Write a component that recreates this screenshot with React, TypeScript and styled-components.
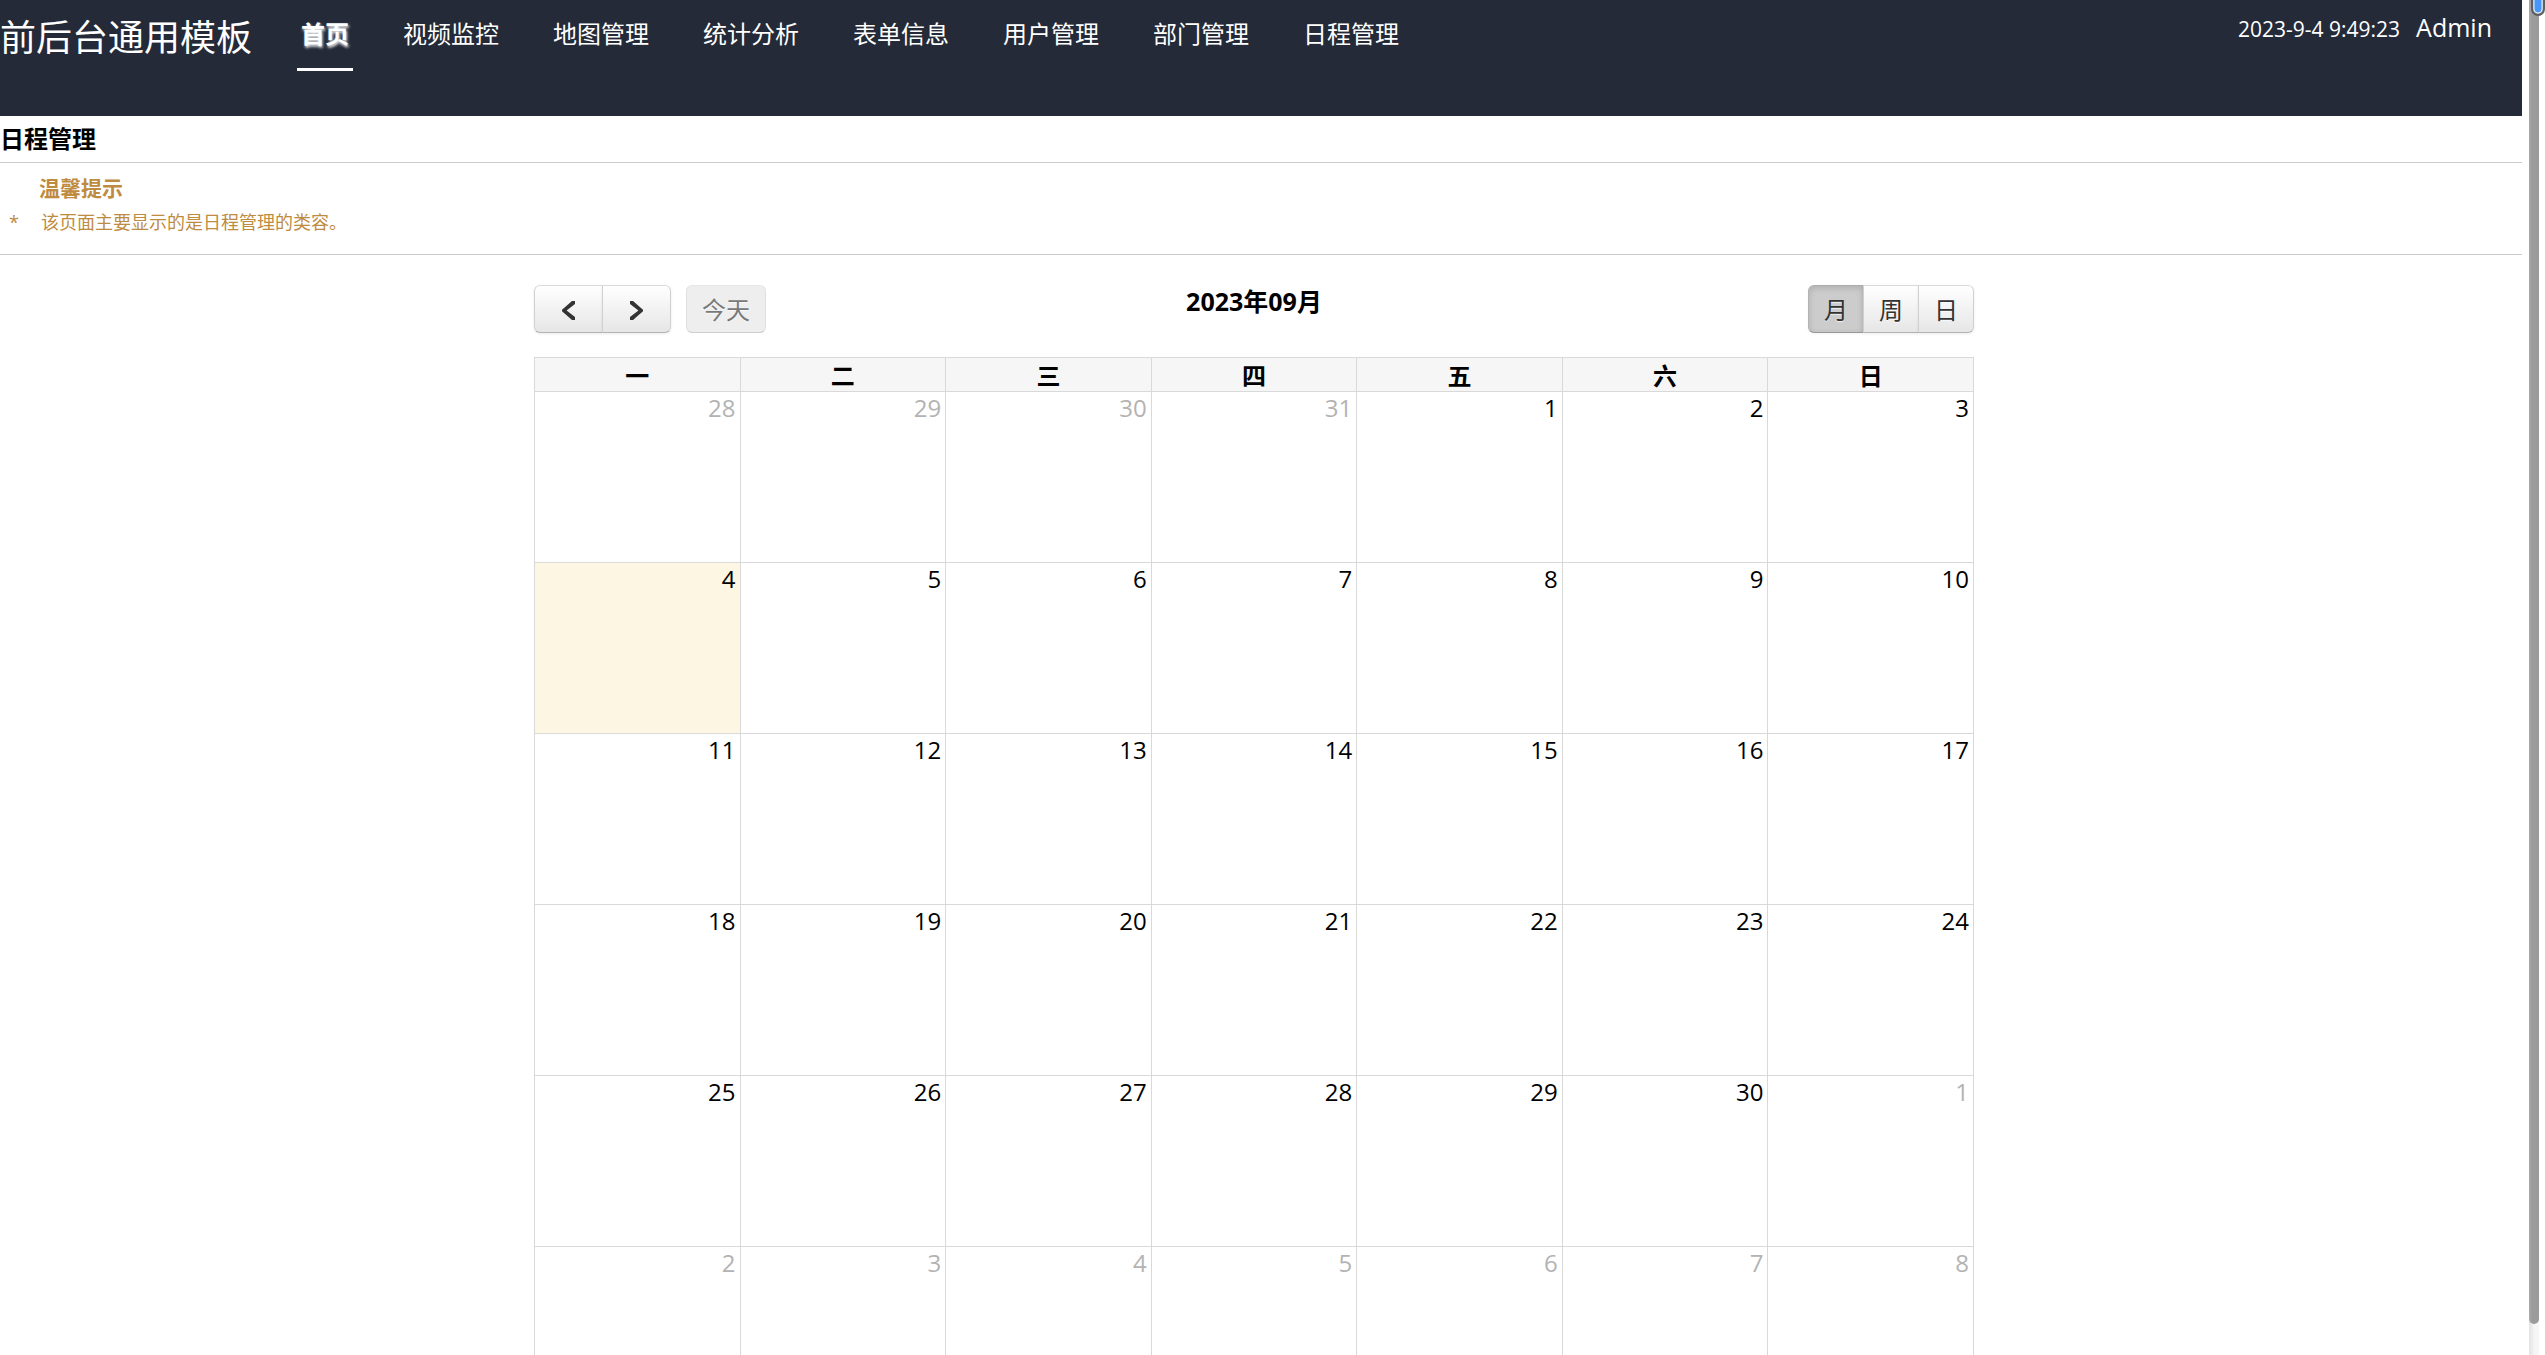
import { FC, useState } from 'react'
import styled, { createGlobalStyle, css } from 'styled-components'

type DayKind = 'current' | 'other' | 'today'

interface Day {
  date: number
  kind: DayKind
}

const navItems = [
  '首页',
  '视频监控',
  '地图管理',
  '统计分析',
  '表单信息',
  '用户管理',
  '部门管理',
  '日程管理',
]

const weekDays = ['一', '二', '三', '四', '五', '六', '日']

const views = ['月', '周', '日']

const WEEKS_SHOWN = 6
const DAYS_BEFORE = 4
const DAYS_IN_PREVIOUS = 31
const DAYS_IN_MONTH = 30
const TODAY = 4

// always six weeks, the days around the month are greyed out
const weeks: Day[][] = Array.from({ length: WEEKS_SHOWN }, (_, week) =>
  weekDays.map((_, weekDay) => {
    const date = week * 7 + weekDay + 1 - DAYS_BEFORE

    if (date < 1) return { date: DAYS_IN_PREVIOUS + date, kind: 'other' }
    if (date > DAYS_IN_MONTH) return { date: date - DAYS_IN_MONTH, kind: 'other' }

    return { date, kind: date === TODAY ? 'today' : 'current' }
  })
)

const Calendar: FC = () => {
  const [selectedView, setSelectedView] = useState<number>(0)

  return (
    <CalendarWrapper>
      <Toolbar>
        <ToolbarSide>
          <ButtonGroup>
            <ArrowButton type="button" aria-label="上个月">
              <Arrow viewBox="0 0 13 19">
                <polygon points="0,8.7 10,0 13,0 13,3 4.6,9.5 13,16 13,19 10,19 0,10.3" />
              </Arrow>
            </ArrowButton>
            <ArrowButton type="button" aria-label="下个月">
              <Arrow viewBox="0 0 13 19">
                <polygon points="13,8.7 3,0 0,0 0,3 8.4,9.5 0,16 0,19 3,19 13,10.3" />
              </Arrow>
            </ArrowButton>
          </ButtonGroup>
          <TodayButton type="button" disabled>
            今天
          </TodayButton>
        </ToolbarSide>
        <MonthTitle>2023年09月</MonthTitle>
        <ToolbarSide $end>
          <ButtonGroup>
            {views.map((view, i) => (
              <ViewButton
                key={view}
                type="button"
                $active={i === selectedView}
                aria-pressed={i === selectedView}
                onClick={() => setSelectedView(i)}
              >
                {view}
              </ViewButton>
            ))}
          </ButtonGroup>
        </ToolbarSide>
      </Toolbar>
      <MonthTable>
        <thead>
          <tr>
            {weekDays.map((weekDay) => (
              <WeekDay key={weekDay} scope="col">
                {weekDay}
              </WeekDay>
            ))}
          </tr>
        </thead>
        <tbody>
          {weeks.map((week, i) => (
            <tr key={i}>
              {week.map((day) => (
                <DayCell key={day.date} $kind={day.kind}>
                  {day.date}
                </DayCell>
              ))}
            </tr>
          ))}
        </tbody>
      </MonthTable>
    </CalendarWrapper>
  )
}

const App: FC = () => (
  <>
    <GlobalStyle />
    <Shell>
      <Content>
        <Header>
          <Brand>前后台通用模板</Brand>
          <Nav>
            {navItems.map((item, i) => (
              <NavLink key={item} href="#" $active={i === 0}>
                {item}
              </NavLink>
            ))}
          </Nav>
          <UserInfo>
            <Clock>2023-9-4 9:49:23</Clock>
            <span>Admin</span>
          </UserInfo>
        </Header>
        <main>
          <PageTitle>日程管理</PageTitle>
          <Notice>
            <NoticeTitle>温馨提示</NoticeTitle>
            <NoticeText>
              <NoticeMark>*</NoticeMark>
              该页面主要显示的是日程管理的类容。
            </NoticeText>
          </Notice>
          <Calendar />
        </main>
      </Content>
      <ScrollTrack aria-hidden="true">
        <ScrollThumb />
        <ScrollMarker viewBox="0 0 14 17">
          <rect x="1" y="-12" width="12" height="27" rx="6" fill="#aab4c3" stroke="#5f5f5f" strokeWidth="2" />
          <rect x="3" y="-12" width="8" height="25" rx="4" fill="#4895fb" stroke="#e4edf8" strokeWidth="1" />
        </ScrollMarker>
      </ScrollTrack>
    </Shell>
  </>
)

const GlobalStyle = createGlobalStyle`
  * {
    box-sizing: border-box;
  }

  body {
    margin: 0;
    background-color: white;
    color: black;
    font-family: 'Open Sans', 'Noto Sans CJK SC', sans-serif;
    font-size: 24px;
    line-height: 32px;
  }

  button {
    font-family: inherit;
    font-size: inherit;
  }
`

const Shell = styled.div`
  display: flex;
  height: 100vh;
  overflow: hidden;
`

const Content = styled.div`
  flex: 1;
  min-width: 0;
  overflow: hidden;
`

const Header = styled.header`
  display: flex;
  align-items: flex-start;
  height: 116px;
  padding-right: 30px;
  background-color: #242a38;
  color: white;
`

const Brand = styled.div`
  padding-top: 14px;
  font-size: 36px;
  line-height: 48px;
  white-space: nowrap;
`

const Nav = styled.nav`
  display: flex;
  gap: 46px;
  margin-left: 45px;
`

const NavLink = styled.a<{ $active: boolean }>`
  height: 71px;
  padding: 18px 4px 0;
  border-bottom: 3px solid transparent;
  color: white;
  text-decoration: none;
  white-space: nowrap;

  ${({ $active }) =>
    $active &&
    css`
      border-bottom-color: white;
      font-weight: bold;
      text-shadow: 1px 2px 3px white;
    `}
`

const UserInfo = styled.div`
  display: flex;
  align-items: baseline;
  gap: 16px;
  margin-left: auto;
  padding-top: 11px;
  font-size: 25px;
  white-space: nowrap;
`

const Clock = styled.time`
  font-size: 21px;
`

const PageTitle = styled.h1`
  margin: 0;
  padding: 7px 0;
  border-bottom: 1px solid #ccc;
  font-size: 24px;
  line-height: 32px;
`

const Notice = styled.section`
  height: 92px;
  padding-top: 7px;
  border-bottom: 1px solid #ccc;
  color: #be8b41;
`

const NoticeTitle = styled.h2`
  margin: 0;
  padding-left: 39px;
  font-size: 21px;
  line-height: 36px;
`

const NoticeText = styled.p`
  display: flex;
  margin: 0;
  padding-left: 9px;
  font-size: 18px;
`

const NoticeMark = styled.span`
  width: 32px;
`

const CalendarWrapper = styled.section`
  max-width: 1454px;
  margin: 30px auto 0;
  padding-right: 14px;
`

const Toolbar = styled.div`
  display: grid;
  grid-template-columns: 1fr auto 1fr;
  margin-bottom: 24px;
`

const ToolbarSide = styled.div<{ $end?: boolean }>`
  display: flex;
  justify-content: ${({ $end }) => ($end ? 'flex-end' : 'flex-start')};
  gap: 15px;
`

const MonthTitle = styled.h2`
  margin: 0;
  font-size: 25px;
  line-height: 32px;
`

const ButtonGroup = styled.div`
  display: flex;
`

const Button = styled.button`
  height: 48px;
  padding: 0 0 2px;
  border: 1px solid;
  border-color: #dadada #d0d0d0 #b3b3b3;
  border-radius: 6px;
  background: linear-gradient(to bottom, #ffffff, #e6e6e6);
  box-shadow: inset 0 1px 0 rgba(255, 255, 255, 0.2),
    0 1px 3px rgba(0, 0, 0, 0.08);
  color: #333;
  text-shadow: 0 1px 1px rgba(255, 255, 255, 0.75);
  cursor: pointer;

  ${ButtonGroup} > &:not(:first-child) {
    margin-left: -1px;
    border-top-left-radius: 0;
    border-bottom-left-radius: 0;
  }

  ${ButtonGroup} > &:not(:last-child) {
    border-top-right-radius: 0;
    border-bottom-right-radius: 0;
  }
`

const ArrowButton = styled(Button)`
  display: flex;
  align-items: center;
  justify-content: center;
  width: 69px;
  padding: 2px 0 0;
`

const Arrow = styled.svg`
  width: 13px;
  height: 19px;
  fill: #333;
`

const TodayButton = styled(Button)`
  width: 80px;

  &:disabled {
    background: #e6e6e6;
    box-shadow: none;
    opacity: 0.65;
    cursor: default;
  }
`

const ViewButton = styled(Button)<{ $active: boolean }>`
  width: 56px;

  ${({ $active }) =>
    $active &&
    css`
      border-color: #adadad #b3b3b3 #999;
      background: #ccc;
      box-shadow: inset 0 2px 6px rgba(0, 0, 0, 0.15),
        0 1px 3px rgba(0, 0, 0, 0.05);
    `}
`

const MonthTable = styled.table`
  width: 100%;
  border-collapse: collapse;
  table-layout: fixed;
`

const WeekDay = styled.th`
  height: 34px;
  padding: 2px 0 0;
  border: 1px solid #d9d9d9;
  background-color: #f6f6f6;
  line-height: 30px;
`

const DayCell = styled.td<{ $kind: DayKind }>`
  height: 171px;
  padding: 0 4px;
  border: 1px solid #d9d9d9;
  background-color: ${({ $kind }) => ($kind === 'today' ? '#fdf6e3' : 'white')};
  color: ${({ $kind }) => ($kind === 'other' ? '#b3b3b3' : 'black')};
  text-align: right;
  vertical-align: top;
`

const ScrollTrack = styled.div`
  position: relative;
  flex: none;
  width: 10px;
  height: 100vh;
  margin: 0 6px 0 7px;
  background: linear-gradient(to right, #e2e2e2, #f6f6f6 60%);
`

const ScrollThumb = styled.div`
  height: calc(100% - 31px);
  border-radius: 0 0 5px 5px;
  background: linear-gradient(to right, #ababab, #9b9b9b 30%);
`

const ScrollMarker = styled.svg`
  position: absolute;
  top: 0;
  left: 2px;
  width: 14px;
  height: 17px;
`

export default App
